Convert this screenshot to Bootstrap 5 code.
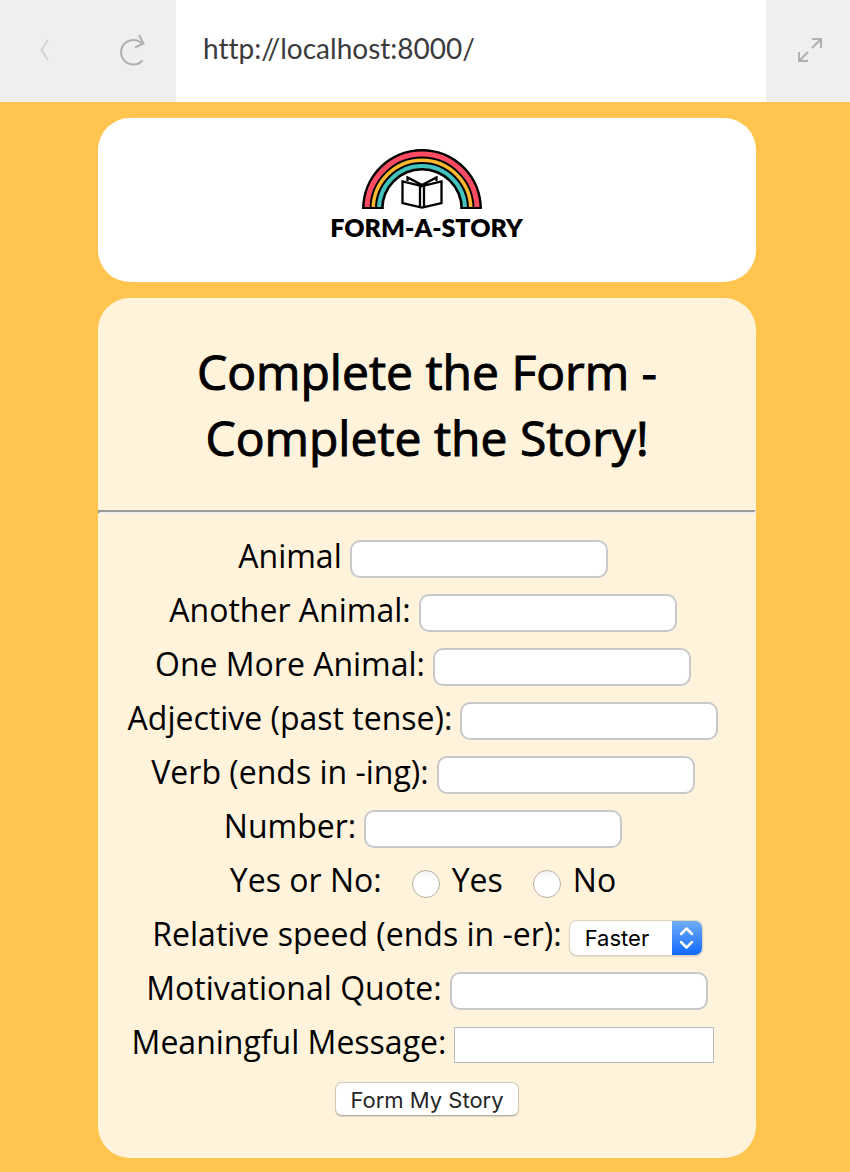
<!DOCTYPE html>
<html lang="en">
<head>
<meta charset="utf-8">
<meta name="viewport" content="width=device-width, initial-scale=1">
<title>Form-A-Story</title>
<link href="https://cdn.jsdelivr.net/npm/bootstrap@5.3.0/dist/css/bootstrap.min.css" rel="stylesheet">
<style>
body { background: #ffc54f; color: #000; font-family: "Open Sans", sans-serif; font-size: 32px; }
.browser-bar { background: #efefef; height: 102px; }
.nav-tools { width: 176px; padding: 0 26px 0 30px; }
.tool-btn { width: 30px; height: 40px; line-height: 0; }
.expand-wrap { width: 84px; padding: 0 0 2px 4px; }
.url-box { font-family: Lato, sans-serif; font-size: 28px; font-variant-ligatures: none; color: #3b3b3d; padding: 0 27px 6px; }
.page-area { padding: 16px 94px 14px 98px; }
.panel { border-radius: 32px; }
.logo-panel { background: #fff; padding: 31px 0 37px; margin-bottom: 16px; }
.logo-panel a { color: #000; padding-right: 1px; }
.logo-art { margin-right: 9px; }
.logo-name { font-family: Lato, sans-serif; font-weight: 800; font-size: 25px; line-height: 36px; }
.story-panel { background: #fff3dc; padding: 41px 0 42px; }
.story-title { font-size: 48px; font-weight: 400; line-height: 66px; -webkit-text-stroke: 1px #000; margin: 0 0 39px; }
.rule { height: 4px; border: 2px solid; border-color: #999 #eee #eee #999; opacity: 1; margin: 0 0 16px; }
.form-line { height: 54px; line-height: 52px; gap: 8px; }
.form-line.spaced { padding-right: 8px; }
.form-line label, .form-line .lbl { font-size: 32px; padding-bottom: 2px; }
.text-field { width: 258px; height: 38px; background: #fff; border: 2px solid #c8c8cc; border-radius: 10px; padding: 0 8px; font-size: 22px; margin-top: 4px; }
.area-field { width: 260px; height: 36px; background: #fff; border: 1px solid #b9b9bd; border-radius: 0; padding: 0 4px; font-size: 22px; resize: none; overflow: hidden; margin-top: 4px; }
.radio-dot { appearance: none; width: 28px; height: 28px; border: 1px solid #b5b0a8; border-radius: 50%; background: linear-gradient(#f4f4f4, #fff 30%); margin: 6px 4px 0 6px; }
.speed { width: 132px; height: 34px; margin-top: 6px; border-radius: 7px; background: #fff; box-shadow: 0 0 0 1px #ddd3c0, 0 1px 2px #a9a193; overflow: hidden; }
.speed select { appearance: none; border: 0; background: transparent; width: 102px; padding: 0 0 0 15px; font: 22px/34px Inter, sans-serif; color: #000; }
.speed .arrows { width: 30px; background: linear-gradient(#6fadf8, #1269ff); }
.submit-btn { font: 22px/30px Inter, sans-serif; color: #262626; background: #fff; border: 1px solid #d3c9b7; border-bottom-color: #b5ad9f; border-radius: 7px; width: 184px; height: 34px; padding: 2px 0 0; box-shadow: 0 1px 1px #ddd2bf; margin-top: 12px; }
</style>
</head>
<body>
<header class="browser-bar d-flex align-items-stretch">
  <div class="nav-tools d-flex align-items-center justify-content-between">
    <button type="button" class="tool-btn btn p-0 border-0" aria-label="Back"><svg width="30" height="30" fill="none" stroke="#d3d3d5" stroke-width="2"><path d="M18 4 11.500 14 18 24"/></svg></button>
    <button type="button" class="tool-btn btn p-0 border-0" aria-label="Reload"><svg width="30" height="36" viewBox="0 0 30 36" fill="none" stroke="#b0b0b3" stroke-width="2"><path d="M22.500 27.500A12.300 12.300 0 1 1 22.500 11M19 2 23.500 10.500 15 14.500"/></svg></button>
  </div>
  <div class="url-box bg-white flex-grow-1 d-flex align-items-center">http://localhost:8000/</div>
  <div class="expand-wrap d-flex align-items-center justify-content-center">
    <button type="button" class="btn p-0 border-0 lh-1" aria-label="Expand"><svg width="26" height="26" viewBox="0 0 26 26" fill="none" stroke="#b0b0b3" stroke-width="2"><path d="M15 2H24V11M24 2 15 11M2 15V24H11M2 24 11 15"/></svg></button>
  </div>
</header>
<main class="page-area">
  <div class="panel logo-panel">
    <a href="#" class="d-flex flex-column align-items-center text-decoration-none">
      <svg class="logo-art" width="122" height="60" viewBox="-61 -60 122 60">
        <path d="M-60 0a60 60 0 0 1 120 0H38.500a38.500 38.500 0 0 0-77 0z" fill="#000"/>
        <g fill="none">
          <path d="M-55 0a55 55 0 0 1 110 0" stroke="#ff4c62" stroke-width="5"/>
          <path d="M-48.800 0a48.800 48.800 0 0 1 97.600 0" stroke="#ffb92c" stroke-width="3.500"/>
          <path d="M-43 0a43 43 0 0 1 86 0" stroke="#43c3bd" stroke-width="4"/>
          <path d="M-60-1H-38.500M38.500-1H60" stroke="#000" stroke-width="2"/>
          <path d="M-19.500-27.500V-6L0-1.500 19.500-6V-27.500L0-23zM-2-23V-2M2-23V-2M-14.500-28V-31.500L0-24 14.500-31.500V-28" stroke="#000" stroke-width="2.300"/>
        </g>
      </svg>
      <span class="logo-name">FORM-A-STORY</span>
    </a>
  </div>
  <section class="panel story-panel">
    <h1 class="story-title text-center">Complete the Form -<br>Complete the Story!</h1>
    <hr class="rule">
    <form>
      <div class="form-line spaced d-flex justify-content-center align-items-center"><label for="a1">Animal</label><input class="text-field" type="text" id="a1"></div>
      <div class="form-line spaced d-flex justify-content-center align-items-center"><label for="a2">Another Animal:</label><input class="text-field" type="text" id="a2"></div>
      <div class="form-line spaced d-flex justify-content-center align-items-center"><label for="a3">One More Animal:</label><input class="text-field" type="text" id="a3"></div>
      <div class="form-line spaced d-flex justify-content-center align-items-center"><label for="adj">Adjective (past tense):</label><input class="text-field" type="text" id="adj"></div>
      <div class="form-line spaced d-flex justify-content-center align-items-center"><label for="verb">Verb (ends in -ing):</label><input class="text-field" type="text" id="verb"></div>
      <div class="form-line spaced d-flex justify-content-center align-items-center"><label for="num">Number:</label><input class="text-field" type="text" id="num"></div>
      <div class="form-line spaced d-flex justify-content-center align-items-center">
        <span class="lbl me-3">Yes or No:</span>
        <input class="radio-dot" type="radio" name="yn" id="yes"><label for="yes" class="me-3">Yes</label>
        <input class="radio-dot" type="radio" name="yn" id="no"><label for="no">No</label>
      </div>
      <div class="form-line d-flex justify-content-center align-items-center"><label for="speed">Relative speed (ends in -er):</label>
        <span class="speed d-flex"><select id="speed"><option>Faster</option><option>Slower</option></select><span class="arrows d-flex"><svg width="30" height="34" fill="none" stroke="#fff" stroke-width="2.500" stroke-linecap="round" stroke-linejoin="round"><path d="M9 13 14.500 7.500 20 13M9 21 14.500 26.500 20 21"/></svg></span></span>
      </div>
      <div class="form-line d-flex justify-content-center align-items-center"><label for="quote">Motivational Quote:</label><input class="text-field" type="text" id="quote"></div>
      <div class="form-line spaced d-flex justify-content-center align-items-center"><label for="msg">Meaningful Message:</label><textarea class="area-field" id="msg" rows="1"></textarea></div>
      <div class="d-flex justify-content-center"><button type="submit" class="submit-btn">Form My Story</button></div>
    </form>
  </section>
</main>
<script src="https://cdn.jsdelivr.net/npm/bootstrap@5.3.0/dist/js/bootstrap.bundle.min.js"></script>
</body>
</html>
